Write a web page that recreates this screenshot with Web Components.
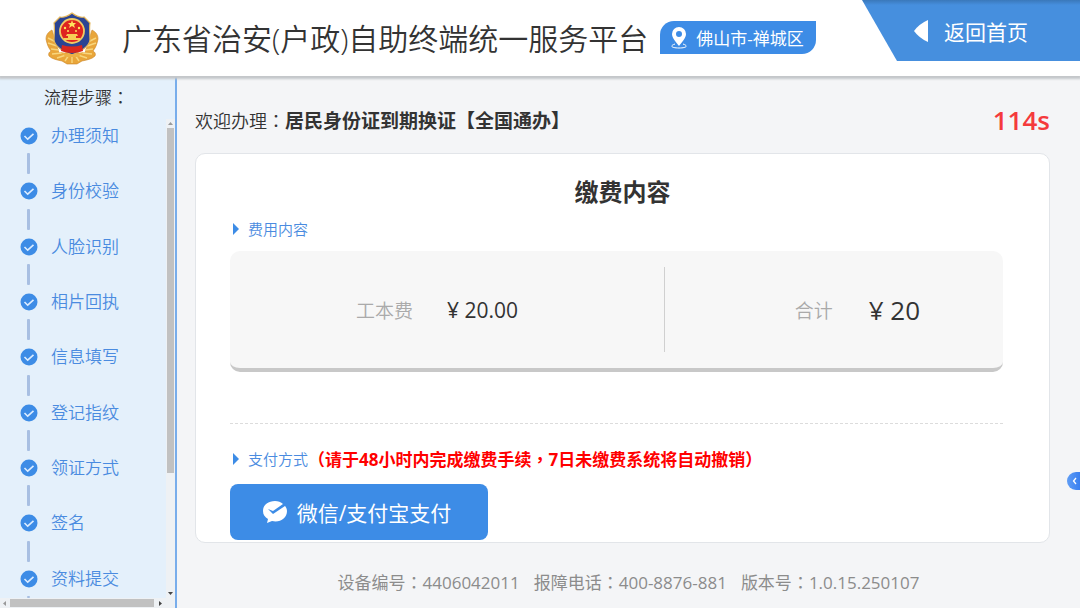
<!DOCTYPE html>
<html lang="zh-CN">
<head>
<meta charset="utf-8">
<meta name="viewport" content="width=device-width, initial-scale=1">
<title>广东省治安(户政)自助终端统一服务平台</title>
<style>
  body {
    margin: 0;
    height: 100vh;
    overflow: hidden;
    font-family: "Open Sans", "Noto Sans CJK SC", sans-serif;
    color: #333;
    --blue: #3d8ce6;
    --step: #4a8be0;
    --punct: "Noto Sans CJK TC", sans-serif;
  }
</style>
</head>
<body>
<kiosk-app></kiosk-app>

<script>
class KioskHeader extends HTMLElement {
  connectedCallback() {
    this.attachShadow({ mode: 'open' });
    this.shadowRoot.innerHTML = `
      <style>
        :host {
          display: flex;
          align-items: flex-start;
          height: 76px;
          flex: none;
          position: relative;
          z-index: 1;
          background: #fff;
          box-shadow: 0 2px 2px 1px #c4c7ca;
        }
        .logo {
          width: 54px;
          height: 54px;
          margin: 11px 23px 0 45px;
          flex: none;
        }
        h1 {
          margin: 0;
          font-size: 30px;
          line-height: 44px;
          padding-top: 17px;
          font-weight: 350;
          white-space: nowrap;
        }
        slot {
          display: block;
          flex: 1;
          padding: 21px 0 0 12px;
        }
        a {
          display: flex;
          align-items: center;
          box-sizing: border-box;
          width: 218px;
          height: 61px;
          padding-left: 52px;
          gap: 16px;
          color: #fff;
          font-size: 21px;
          text-decoration: none;
          background: linear-gradient(#3a78ba, #468fde 5px);
          clip-path: polygon(0 0, 100% 0, 100% 100%, 35px 100%);
        }
      </style>
      <svg class="logo" viewBox="0 0 54 54" aria-hidden="true">
        <g fill="#e9a63a" stroke="#c98428" stroke-width=".6">
          <path d="M7 19C3 21 1 24 1 28c1 5 2 8 5 12-2 1-3 3-2 5 3 3 8 4 13 5l5 3h10l5-3c5-1 10-2 13-5 1-2 0-4-2-5 3-4 4-7 5-12 0-4-2-7-6-9L40 42H14z"/>
        </g>
        <g fill="none" stroke="#f8d67c" stroke-width="1.4">
          <path d="M3 27l8 4M3 32l9 3M6 38l8 1M7 43l10-1M12 47l9-3M51 27l-8 4M51 32l-9 3M48 38l-8 1M47 43l-10-1M42 47l-9-3M20 50l4-6M34 50l-4-6M27 52v-8"/>
        </g>
        <path d="M27 2c4 3 8 5 12 4l6 6c-1 5 0 11 0 17-1 7-9 11-18 15C18 40 10 36 9 29c0-6 1-12 0-17l6-6c4 1 8-1 12-4z" fill="#2b4493" stroke="#e4b65a" stroke-width="1.2"/>
        <circle cx="27" cy="20" r="12" fill="#df251f" stroke="#f1ca63" stroke-width="1.8"/>
        <path d="M17 34q10 3 20 0l1 6q-11 4-22 0z" fill="#d9271e"/>
        <path d="M27 9l1 3h3l-2 2 1 3-3-2-3 2 1-3-2-2h3z" fill="#ffe45e"/>
        <g fill="#ffe45e"><circle cx="20" cy="17" r="1.2"/><circle cx="34" cy="17" r="1.2"/><circle cx="23" cy="20" r="1"/><circle cx="31" cy="20" r="1"/></g>
        <path d="M22 23h10l1 2h-2v2h4v2H19v-2h4v-2h-2z" fill="#f7cf55"/>
        <path d="M15 41q12 4 24 0l-6 5H21z" fill="#edb145"/>
      </svg>
      <h1>广东省治安(户政)自助终端统一服务平台</h1>
      <slot></slot>
      <a href="#">
        <svg width="14" height="22" viewBox="0 0 14 22" aria-hidden="true"><path d="M14 0v22Q5 18 0 11Q5 4 14 0z" fill="#fff"/></svg>
        返回首页
      </a>
    `;
  }
}
customElements.define('kiosk-header', KioskHeader);

class RegionTag extends HTMLElement {
  connectedCallback() {
    this.attachShadow({ mode: 'open' });
    this.shadowRoot.innerHTML = `
      <style>
        :host {
          display: inline-flex;
          align-items: center;
          height: 33px;
          padding: 0 12px 0 10px;
          gap: 8px;
          border-radius: 14px 0;
          background: var(--blue);
          color: #fff;
          font-size: 17px;
          white-space: nowrap;
        }
      </style>
      <svg width="18" height="24" viewBox="0 0 18 24" aria-hidden="true">
        <path d="M9 1a7 7 0 0 0-7 7c0 4 4 8 7 12 3-4 7-8 7-12a7 7 0 0 0-7-7zm0 4a3 3 0 1 1 0 6 3 3 0 0 1 0-6z" fill="#fff" fill-rule="evenodd"/>
        <path d="M5 18c-6 2-3 4 4 4s10-2 4-4" fill="none" stroke="#fff"/>
      </svg>
      <slot></slot>
    `;
  }
}
customElements.define('region-tag', RegionTag);

class StepSidebar extends HTMLElement {
  connectedCallback() {
    const steps = ['办理须知', '身份校验', '人脸识别', '相片回执', '信息填写', '登记指纹', '领证方式', '签名', '资料提交'];
    const items = steps.map(name => `
      <li>
        <svg width="18" height="18" viewBox="0 0 18 18" aria-hidden="true">
          <circle cx="9" cy="9" r="8.5" fill="var(--blue)"/>
          <path d="M4.5 9l3.2 3.2 5.8-5.4" fill="none" stroke="#dcecff" stroke-width="1.6"/>
        </svg>
        ${name}
      </li>
      <li class="link" aria-hidden="true"></li>`).join('');
    this.attachShadow({ mode: 'open' });
    this.shadowRoot.innerHTML = `
      <style>
        :host {
          display: flex;
          flex-direction: column;
          width: 175px;
          flex: none;
          border-right: 2px solid #78adeb;
          background: #e4f0fb;
          font-size: 17px;
        }
        h2 {
          margin: 0;
          padding: 8px 0 0 44px;
          font-size: 17px;
          font-weight: 350;
          line-height: 26px;
          height: 35px;
        }
        h2 span { font-family: var(--punct); }
        .view {
          flex: 1;
          min-height: 0;
          display: flex;
        }
        ol {
          flex: 1;
          margin: 0;
          padding: 7px 0 0 20px;
          list-style: none;
          display: flex;
          flex-direction: column;
          justify-content: space-between;
        }
        li {
          display: flex;
          align-items: center;
          gap: 13px;
          height: 20px;
          line-height: 20px;
          color: var(--step);
          font-weight: 350;
        }
        .link {
          width: 3px;
          height: 21px;
          margin-left: 7px;
          border-radius: 1px;
          background: #a8bfe2;
        }
        .link:last-child { height: 2px; }
        .bar {
          display: flex;
          align-items: center;
          background: #eef1f4;
        }
        .bar i { background: #c1c1c1; }
        .v {
          width: 9px;
          flex-direction: column;
          justify-content: space-between;
        }
        .v i {
          width: 7px;
          height: 345px;
          margin: 2px 0 auto;
        }
        .h {
          height: 10px;
          padding-right: 11px;
          gap: 4px;
        }
        .h i {
          flex: 1;
          height: 8px;
        }
        .bar svg { display: block; flex: none; }
      </style>
      <h2>流程步骤<span lang="zh-TW">：</span></h2>
      <div class="view">
        <ol>${items}</ol>
        <div class="bar v">
          <svg width="9" height="7" viewBox="0 0 9 7"><path d="M2 6l2.500-3L7 6z" fill="#999"/></svg>
          <i></i>
          <svg width="9" height="8" viewBox="0 0 9 8"><path d="M2 2l2.500 3L7 2z" fill="#444"/></svg>
        </div>
      </div>
      <div class="bar h">
        <svg width="6" height="9" viewBox="0 0 6 9"><path d="M6 2L3 4.500 6 7z" fill="#999"/></svg>
        <i></i>
        <svg width="6" height="9" viewBox="0 0 6 9"><path d="M1 2l3 2.500L1 7z" fill="#444"/></svg>
      </div>
    `;
  }
}
customElements.define('step-sidebar', StepSidebar);

class SectionLabel extends HTMLElement {
  connectedCallback() {
    this.attachShadow({ mode: 'open' });
    this.shadowRoot.innerHTML = `
      <style>
        :host {
          display: flex;
          align-items: center;
          height: 20px;
          padding-left: 3px;
          line-height: 20px;
        }
        svg { margin-right: 9px; }
        h3 {
          margin: 0;
          font-size: 15px;
          font-weight: 350;
          color: var(--step);
        }
      </style>
      <svg width="6" height="12" viewBox="0 0 6 12" aria-hidden="true"><path d="M0 0l6 6-6 6z" fill="var(--blue)"/></svg>
      <h3>${this.getAttribute('label')}</h3>
      <slot></slot>
    `;
  }
}
customElements.define('section-label', SectionLabel);

class FeePanel extends HTMLElement {
  connectedCallback() {
    this.attachShadow({ mode: 'open' });
    this.shadowRoot.innerHTML = `
      <style>
        :host {
          display: block;
          border-radius: 10px;
          border-bottom: 4px solid #c8c8c8;
          background: #f7f7f7;
        }
        dl {
          margin: 0;
          display: grid;
          grid-template-columns: 435fr 338fr;
          padding: 16px 0;
        }
        div {
          display: flex;
          align-items: center;
          height: 85px;
          box-sizing: border-box;
        }
        .item {
          justify-content: center;
          gap: 34px;
          padding-right: 20px;
          border-right: 1px solid #d0d0d0;
        }
        .total {
          justify-content: flex-end;
          gap: 36px;
          padding-right: 83px;
        }
        dt {
          font-size: 19px;
          font-weight: 350;
          color: #aaa;
        }
        dd {
          margin: 0;
          font-size: 21px;
        }
        .total dd { font-size: 26px; }
      </style>
      <dl>
        <div class="item"><dt>工本费</dt><dd>¥ 20.00</dd></div>
        <div class="total"><dt>合计</dt><dd>¥ 20</dd></div>
      </dl>
    `;
  }
}
customElements.define('fee-panel', FeePanel);

class PayButton extends HTMLElement {
  connectedCallback() {
    this.attachShadow({ mode: 'open' });
    this.shadowRoot.innerHTML = `
      <style>
        :host { display: block; }
        button {
          display: flex;
          align-items: center;
          justify-content: center;
          gap: 10px;
          width: 258px;
          height: 56px;
          padding: 0 4px 0 0;
          border: 0;
          border-radius: 8px;
          background: var(--blue);
          color: #fff;
          font-family: inherit;
          font-size: 21px;
        }
      </style>
      <button type="button">
        <svg width="24" height="22" viewBox="0 0 24 22" aria-hidden="true">
          <path d="M12 0C5 0 0 4 0 10c0 4 2 6 5 8l-1 4 5-2c8 2 15-3 15-10 0-2-1-4-2-5L10 13l-5-5 5 2 10-7C18 1 15 0 12 0z" fill="#fff"/>
        </svg>
        <slot></slot>
      </button>
    `;
  }
}
customElements.define('pay-button', PayButton);

class PaymentCard extends HTMLElement {
  connectedCallback() {
    this.attachShadow({ mode: 'open' });
    this.shadowRoot.innerHTML = `
      <style>
        :host {
          display: block;
          flex: 1;
          box-sizing: border-box;
          border: 1px solid #e2e5e9;
          border-radius: 10px;
          background: #fff;
        }
        h2 {
          margin: 20px 0 9px;
          font-size: 24px;
          line-height: 36px;
          text-align: center;
        }
        .body { padding: 0 46px 2px 34px; }
        fee-panel { margin-top: 12px; }
        hr {
          margin: 51px 0 25px;
          border: 0;
          border-top: 1px dashed #dcdcdc;
        }
        strong {
          font-size: 17px;
          color: #f00;
        }
        strong span { font-family: var(--punct); }
        pay-button { margin-top: 15px; }
      </style>
      <h2>缴费内容</h2>
      <div class="body">
        <section-label label="费用内容"></section-label>
        <fee-panel></fee-panel>
        <hr>
        <section-label label="支付方式"><strong>（请于48小时内完成缴费手续<span lang="zh-TW">，</span>7日未缴费系统将自动撤销）</strong></section-label>
        <pay-button>微信/支付宝支付</pay-button>
      </div>
    `;
  }
}
customElements.define('payment-card', PaymentCard);

class KioskApp extends HTMLElement {
  connectedCallback() {
    this.attachShadow({ mode: 'open' });
    this.shadowRoot.innerHTML = `
      <style>
        :host {
          display: flex;
          flex-direction: column;
          height: 100%;
          background: #f4f5f7;
        }
        .page {
          display: flex;
          flex: 1;
          min-height: 0;
        }
        main {
          flex: 1;
          display: flex;
          flex-direction: column;
          padding: 0 30px 0 18px;
        }
        .welcome {
          display: flex;
          align-items: center;
          justify-content: space-between;
          height: 67px;
          padding-top: 10px;
        }
        .welcome p {
          margin: 0;
          font-size: 18px;
          font-weight: 350;
        }
        .welcome b {
          font-size: 19px;
          font-weight: 700;
        }
        .punct { font-family: var(--punct); }
        time {
          font-size: 26px;
          font-weight: 600;
          color: #f43a3c;
        }
        footer {
          display: flex;
          justify-content: center;
          align-items: center;
          gap: 14px;
          height: 65px;
          padding: 12px 0 0 12px;
          box-sizing: border-box;
          font-size: 17px;
          color: #8c8c8c;
          white-space: nowrap;
        }
        .drawer {
          position: absolute;
          right: 0;
          top: 472px;
          width: 13px;
          height: 18px;
          padding: 0;
          border: 0;
          border-radius: 9px 0 0 9px;
          background: linear-gradient(90deg, #5f9df5, #3a80f0);
        }
        .drawer svg { display: block; margin-left: 4px; }
      </style>
      <kiosk-header><region-tag>佛山市-禅城区</region-tag></kiosk-header>
      <div class="page">
        <step-sidebar></step-sidebar>
        <main>
          <div class="welcome">
            <p>欢迎办理<span class="punct" lang="zh-TW">：</span><b>居民身份证到期换证【全国通办】</b></p>
            <time>114s</time>
          </div>
          <payment-card></payment-card>
          <footer>
            <span>设备编号<span class="punct" lang="zh-TW">：</span>4406042011</span>
            <span>报障电话<span class="punct" lang="zh-TW">：</span>400-8876-881</span>
            <span>版本号<span class="punct" lang="zh-TW">：</span>1.0.15.250107</span>
          </footer>
        </main>
      </div>
      <button class="drawer" type="button" aria-label="展开">
        <svg width="8" height="10" viewBox="0 0 8 10"><path d="M5 2L2.500 5 5 8" fill="none" stroke="#fff" stroke-width="1.300"/></svg>
      </button>
    `;
  }
}
customElements.define('kiosk-app', KioskApp);
</script>
</body>
</html>
